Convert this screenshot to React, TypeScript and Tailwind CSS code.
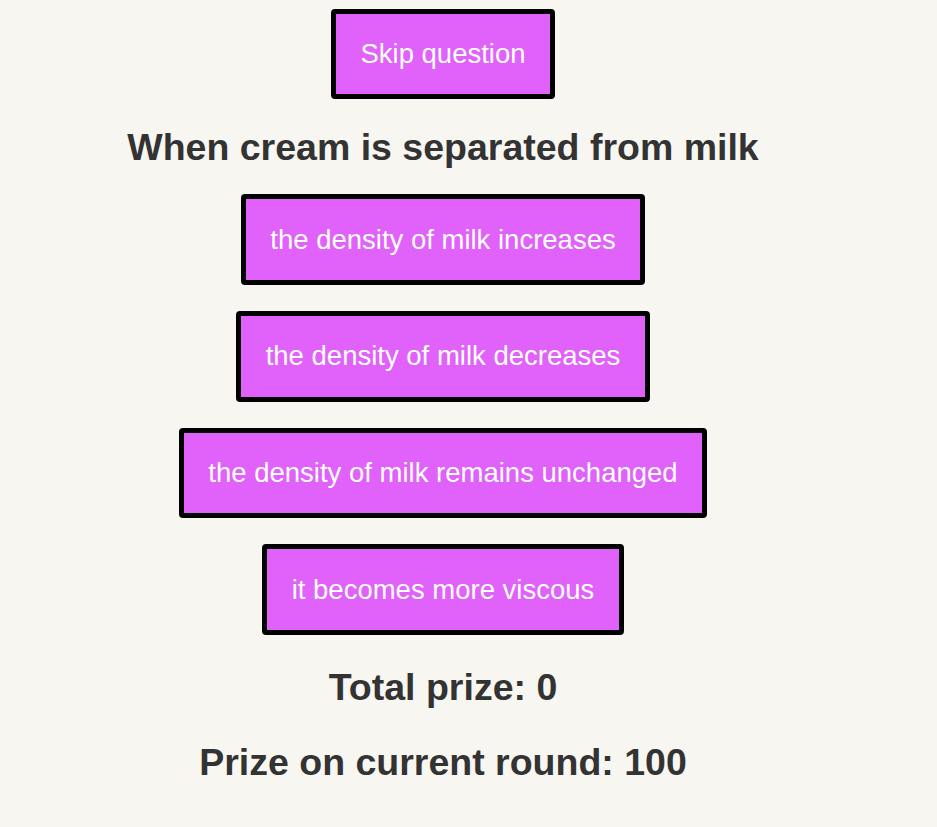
import React from "react";

const options = [
  "the density of milk increases",
  "the density of milk decreases",
  "the density of milk remains unchanged",
  "it becomes more viscous",
];

function Btn({ children }: { children: React.ReactNode }) {
  return (
    <button className="block bg-[#e062fa] text-white border-[5px] border-black rounded-[4px] px-[24.5px] py-[24.5px] text-[27.5px] leading-[1.15] font-['Liberation_Sans',Arial,sans-serif] cursor-pointer">
      {children}
    </button>
  );
}

export default function App() {
  return (
    <div className="min-h-[827px] w-full bg-[#f7f6f1] font-['Liberation_Sans',Arial,sans-serif]">
      <div className="w-[886px] pt-[8.5px] flex flex-col items-center">
        <Btn>Skip question</Btn>
        <h2 className="mt-[27px] text-[37.5px] leading-[1.15] font-bold text-[#333333]">
          When cream is separated from milk
        </h2>
        <div className="mt-[25px] flex flex-col items-center gap-[26px]">
          {options.map((o) => (
            <Btn key={o}>{o}</Btn>
          ))}
        </div>
        <h2 className="mt-[31.5px] text-[37.5px] leading-[1.15] font-bold text-[#333333]">
          Total prize: 0
        </h2>
        <h2 className="mt-[32px] text-[37.5px] leading-[1.15] font-bold text-[#333333]">
          Prize on current round: 100
        </h2>
      </div>
    </div>
  );
}
